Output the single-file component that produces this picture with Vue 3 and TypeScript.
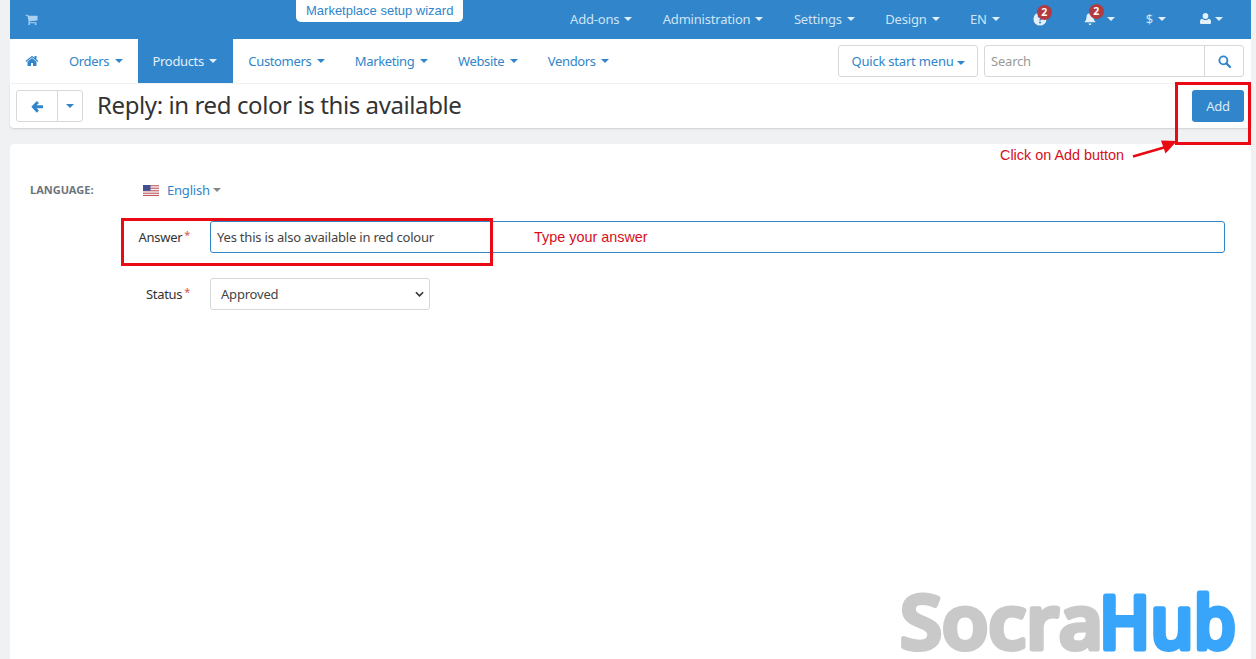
<template>
  <div class="page">
    <header class="topbar">
      <svg class="cart" viewBox="0 0 1664 1792"><path fill="currentColor" d="M640 1536q0 52-38 90t-90 38-90-38-38-90 38-90 90-38 90 38 38 90zm896 0q0 52-38 90t-90 38-90-38-38-90 38-90 90-38 90 38 38 90zm128-1088v512q0 24-16 42.500t-41 21.500l-1044 122q13 60 13 70 0 16-24 64h920q26 0 45 19t19 45-19 45-45 19h-1024q-26 0-45-19t-19-45q0-11 8-31.500t16-36 21.500-40 15.500-29.500l-177-823h-204q-26 0-45-19t-19-45 19-45 45-19h256q16 0 28.500 6.500t19.500 15.500 13 24.500 8 26 5.500 29.500 4.500 26h1201q26 0 45 19t19 45z"/></svg>
      <div class="wizard">Marketplace setup wizard</div>
      <nav class="top-menu">
        <a v-for="item in topItems" :key="item.label" class="top-item">{{ item.label }}<i class="caret" /></a>
        <a class="top-item icon-item help">
          <svg class="top-icon" viewBox="0 0 16 16"><circle cx="8" cy="8" r="7.500" fill="currentColor" /><rect x="7" y="11" width="2" height="2" fill="#3085cb" /><path d="M5.800 6.200c.3-2 4.400-2 4.400.2 0 1.500-2.200 1.400-2.200 3.200" fill="none" stroke="#3085cb" stroke-width="1.700" /></svg>
          <span class="badge">2</span>
        </a>
        <a class="top-item icon-item bell">
          <svg class="top-icon" viewBox="0 0 16 16"><path fill="currentColor" d="M8 1.500c2.600 0 4 1.900 4 4.300 0 3.200 1.200 4.700 2.500 6H1.500C2.800 10.500 4 9 4 5.800c0-2.400 1.400-4.300 4-4.300zM6.300 13h3.400c0 1-.8 1.800-1.700 1.800S6.300 14 6.300 13z" /></svg>
          <span class="badge">2</span>
          <i class="caret" />
        </a>
        <a class="top-item dollar">$<i class="caret" /></a>
        <a class="top-item user">
          <svg class="top-icon user-icon" viewBox="0 0 14 14"><path fill="currentColor" d="M7 1c1.900 0 3.100 1.400 3.100 3.200S8.900 7.500 7 7.500 3.900 6 3.900 4.200 5.100 1 7 1zM3.500 7.300C4.400 8.200 5.600 8.700 7 8.700s2.600-.5 3.500-1.400c1.700.2 2.500 1.700 2.500 3.900 0 1.200-.8 1.800-1.800 1.800H2.800c-1 0-1.800-.6-1.800-1.800 0-2.200.8-3.700 2.500-3.900z" /></svg>
          <i class="caret" />
        </a>
      </nav>
    </header>

    <div class="navbar">
      <a class="nav-home">
        <svg viewBox="0 0 1664 1792"><path fill="currentColor" d="M1408 992v480q0 26-19 45t-45 19h-384v-384h-256v384h-384q-26 0-45-19t-19-45v-480q0-1 .5-3t.5-3l575-474 575 474q1 2 1 6zm223-69-62 74q-8 9-21 11h-3q-13 0-21-7l-692-577-692 577q-12 8-24 7-13-2-21-11l-62-74q-8-10-7-23.500t11-21.500l719-599q32-26 76-26t76 26l244 204v-195q0-14 9-23t23-9h192q14 0 23 9t9 23v408l219 182q10 8 11 21.500t-7 23.500z"/></svg>
      </a>
      <a v-for="item in navItems" :key="item" class="nav-item" :class="{ active: item === 'Products' }">{{ item }}<i class="caret" /></a>
      <div class="nav-right">
        <button class="quick-start">Quick start menu<i class="caret" /></button>
        <div class="search">
          <span class="search-text">Search</span>
          <span class="search-btn">
            <svg viewBox="0 0 14 14"><circle cx="5.800" cy="5.800" r="4.300" fill="none" stroke="currentColor" stroke-width="2" /><path d="M9 9l4 4" stroke="currentColor" stroke-width="2.400" stroke-linecap="round" /></svg>
          </span>
        </div>
      </div>
    </div>

    <div class="titlebar">
      <div class="back-group">
        <span class="back">
          <svg viewBox="0 0 14 14"><path fill="currentColor" d="M6.800 1.500l1.300 1.300c.3.300.3.700 0 1L6 5.700h6.300c.5 0 .7.400.7.800v1.700c0 .4-.2.800-.7.800H6l2.100 1.900c.3.300.3.700 0 1l-1.300 1.300c-.3.300-.7.300-1 0L.8 7.800c-.3-.3-.3-.8 0-1.100l5-5.200c.3-.3.700-.3 1 0z" /></svg>
        </span>
        <span class="back-caret"><i class="caret" /></span>
      </div>
      <h1 class="title">Reply: in red color is this available</h1>
      <button class="add">Add</button>
    </div>

    <main class="card">
      <div class="lang-row">
        <span class="lang-label">LANGUAGE:</span>
        <svg class="flag" viewBox="0 0 16 11">
          <rect width="16" height="11" fill="#eee" />
          <path d="M0 .8h16M0 3.300h16M0 5.800h16M0 8.300h16M0 10.500h16" stroke="#c8505a" stroke-width="1.100" />
          <rect width="7.500" height="5.800" fill="#43508f" />
        </svg>
        <a class="lang-value">English<i class="caret grey" /></a>
      </div>

      <div class="form-row">
        <label class="form-label">Answer<em>*</em></label>
        <div class="answer">Yes this is also available in red colour</div>
      </div>
      <div class="form-row status-row">
        <label class="form-label">Status<em>*</em></label>
        <div class="select">
          <span>Approved</span>
          <svg viewBox="0 0 10 6"><path d="M1 1l4 4 4-4" fill="none" stroke="#333" stroke-width="1.800" /></svg>
        </div>
      </div>
    </main>

    <!-- annotations lying over the page -->
    <div class="mark mark-add" />
    <div class="mark mark-answer" />
    <span class="note note-add">Click on Add button</span>
    <span class="note note-answer">Type your answer</span>
    <svg class="arrow" viewBox="0 0 50 20"><path d="M1 17.500L32 8.500" stroke="#ea0a14" stroke-width="2.600" /><path d="M45 2L29 1.500l4.500 13z" fill="#ea0a14" /></svg>

    <svg class="logo" viewBox="0 0 345 74">
      <text class="logo-socra" x="8" y="64" textLength="203" lengthAdjust="spacingAndGlyphs">Socra</text>
      <text class="logo-hub" x="207" y="64" textLength="137" lengthAdjust="spacingAndGlyphs">Hub</text>
    </svg>
  </div>
</template>

<script setup lang="ts">
const topItems = [
  { label: 'Add-ons' },
  { label: 'Administration' },
  { label: 'Settings' },
  { label: 'Design' },
  { label: 'EN' }
]

const navItems: string[] = ['Orders', 'Products', 'Customers', 'Marketing', 'Website', 'Vendors']
</script>

<style>
html,
body {
  margin: 0;
  height: 100%;
  overflow: hidden;
  background: #eff1f3;
}
</style>

<style scoped>
.page {
  position: relative;
  width: 1256px;
  height: 659px;
  padding: 0 5px 0 10px;
  box-sizing: border-box;
  overflow: hidden;
  font-family: 'Noto Sans', sans-serif;
  font-size: 13px;
  letter-spacing: -0.2px;
  color: #333;
}

.caret {
  display: inline-block;
  margin-left: 6px;
  vertical-align: middle;
  border-top: 4px solid currentColor;
  border-left: 4px solid transparent;
  border-right: 4px solid transparent;
}

.caret.grey {
  margin-left: 3px;
  color: #888;
}

.topbar {
  position: relative;
  display: flex;
  align-items: center;
  height: 39px;
  background: #3085cb;
  color: #cfe4f5;
}

.cart {
  width: 13px;
  height: 13px;
  margin-left: 15px;
  color: #a9d2f0;
}

.wizard {
  position: absolute;
  top: 0;
  left: 286px;
  height: 22px;
  padding: 0 10px;
  line-height: 22px;
  background: #fff;
  border-radius: 0 0 5px 5px;
  color: #3085cb;
  font-family: 'Liberation Sans', sans-serif;
  font-size: 13px;
  letter-spacing: 0;
}

.top-menu {
  display: flex;
  align-items: center;
  margin-left: auto;
  padding: 0 28px 2px 0;
}

.top-item {
  position: relative;
  display: flex;
  align-items: center;
  margin-left: 30.500px;
  white-space: nowrap;
}

.top-item .caret {
  margin-left: 5px;
  color: #e3eff9;
}

.icon-item.help {
  margin-left: 33px;
}

.icon-item.bell {
  margin-left: 36px;
}

.icon-item.bell .caret {
  margin-left: 10px;
}

.top-item.dollar {
  margin-left: 31px;
}

.top-item.user {
  margin-left: 33px;
}

.top-item.user .caret {
  margin-left: 3px;
}

.top-icon {
  width: 14px;
  height: 14px;
  color: #e3eff9;
}

.user-icon {
  width: 13px;
  height: 13px;
}

.badge {
  position: absolute;
  top: -7px;
  left: 4px;
  width: 15px;
  height: 15px;
  border-radius: 50%;
  background: #b33a3f;
  color: #fff;
  font-size: 10.500px;
  font-weight: 700;
  line-height: 15px;
  text-align: center;
  letter-spacing: 0;
}

.bell .badge {
  left: 6px;
  top: -8px;
}

.navbar {
  display: flex;
  align-items: center;
  height: 45px;
  box-sizing: border-box;
  border-bottom: 1px solid #f1f2f3;
  background: #fff;
  color: #3085cb;
}

.nav-home {
  display: flex;
  width: 44px;
  padding-left: 15px;
  box-sizing: border-box;
}

.nav-home svg {
  width: 14px;
  height: 14px;
}

.nav-item {
  display: flex;
  align-items: center;
  height: 44px;
  padding: 0 15px;
  letter-spacing: -0.35px;
  white-space: nowrap;
}

.nav-item .caret {
  margin-left: 5.500px;
}

.nav-item.active {
  padding-right: 16px;
  background: #3085cb;
  color: #e3eff9;
}

.nav-right {
  display: flex;
  align-items: center;
  gap: 6px;
  margin-left: auto;
  margin-right: 7px;
}

.quick-start {
  height: 32px;
  width: 140px;
  padding: 0;
  background: #fff;
  border: 1px solid #d6d8da;
  border-radius: 3px;
  color: #3085cb;
  font: inherit;
  letter-spacing: inherit;
  white-space: nowrap;
}

.quick-start .caret {
  margin-left: 3px;
}

.search {
  display: flex;
  width: 260px;
  height: 32px;
  box-sizing: border-box;
  border: 1px solid #d6d8da;
  border-radius: 3px;
}

.search-text {
  flex: 1;
  padding-left: 6px;
  color: #999;
  line-height: 30px;
}

.search-btn {
  display: flex;
  align-items: center;
  justify-content: center;
  width: 38px;
  border-left: 1px solid #d6d8da;
}

.search-btn svg {
  width: 13px;
  height: 13px;
}

.titlebar {
  display: flex;
  align-items: center;
  height: 44px;
  padding: 0 7px 0 6px;
  background: #fff;
  border-radius: 0 0 4px 4px;
  box-shadow: 0 1px 2px rgba(0, 0, 0, 0.14);
}

.back-group {
  display: flex;
  height: 32px;
  box-sizing: border-box;
  border: 1px solid #d6d8da;
  border-radius: 3px;
  color: #3085cb;
}

.back {
  display: flex;
  align-items: center;
  justify-content: center;
  width: 40px;
  border-right: 1px solid #d6d8da;
}

.back svg {
  width: 13px;
  height: 13px;
}

.back-caret {
  display: flex;
  align-items: center;
  justify-content: center;
  width: 24px;
}

.back-caret .caret {
  margin: 0;
}

.title {
  flex: 1;
  margin: 0 0 4px 14px;
  font-size: 24px;
  font-weight: 400;
  letter-spacing: -0.4px;
  color: #333;
}

.add {
  width: 52px;
  height: 32px;
  padding: 0;
  border: 0;
  border-radius: 3px;
  background: #3085cb;
  color: #dcebf7;
  font: inherit;
  letter-spacing: inherit;
}

.card {
  margin-top: 16px;
  height: 515px;
  padding-top: 37px;
  box-sizing: border-box;
  background: #fff;
  border-radius: 4px 4px 0 0;
}

.lang-row {
  display: flex;
  align-items: center;
  height: 18px;
  padding-left: 20px;
}

.lang-label {
  width: 113px;
  margin-bottom: 2px;
  color: #6c757d;
  font-size: 11px;
  font-weight: 700;
  letter-spacing: 0;
}

.flag {
  width: 16px;
  height: 11px;
  margin-right: 8px;
}

.lang-value {
  display: flex;
  align-items: center;
  color: #3085cb;
}

.form-row {
  display: flex;
  align-items: center;
  margin-top: 22px;
}

.status-row {
  margin-top: 25px;
}

.form-label {
  width: 200px;
  padding-right: 20px;
  box-sizing: border-box;
  text-align: right;
  letter-spacing: -0.3px;
}

.form-label em {
  position: relative;
  top: -3px;
  margin-left: 2px;
  color: #d9534f;
  font-style: normal;
  font-size: 11px;
}

.answer {
  width: 1015px;
  height: 32px;
  padding-left: 6px;
  box-sizing: border-box;
  border: 1px solid #3085cb;
  border-radius: 3px;
  line-height: 30px;
  color: #444;
}

.select {
  display: flex;
  align-items: center;
  justify-content: space-between;
  width: 220px;
  height: 32px;
  padding: 0 5px 0 10px;
  box-sizing: border-box;
  border: 1px solid #d6d8da;
  border-radius: 3px;
  color: #444;
}

.select svg {
  width: 9px;
  height: 6px;
}

.mark {
  position: absolute;
  box-sizing: border-box;
  border: 3px solid #ea0a14;
}

.mark-add {
  left: 1175px;
  top: 82px;
  width: 76px;
  height: 63px;
}

.mark-answer {
  left: 121px;
  top: 218px;
  width: 372px;
  height: 48px;
}

.note {
  position: absolute;
  color: #d4101c;
  font-family: 'Liberation Sans', sans-serif;
  font-size: 14.400px;
  letter-spacing: 0;
  line-height: 16px;
}

.note-add {
  left: 1000px;
  top: 147px;
}

.note-answer {
  left: 534px;
  top: 229px;
}

.arrow {
  position: absolute;
  left: 1132px;
  top: 139px;
  width: 50px;
  height: 20px;
}

.logo {
  position: absolute;
  left: 892px;
  top: 585px;
  width: 345px;
  height: 74px;
}

.logo text {
  font-family: 'Open Sans', sans-serif;
  font-size: 74px;
  font-weight: 600;
  stroke-width: 5px;
  stroke-linejoin: round;
}

.logo-socra {
  fill: #c9c9c9;
  stroke: #c9c9c9;
}

.logo-hub {
  fill: #38a5fb;
  stroke: #38a5fb;
}
</style>
